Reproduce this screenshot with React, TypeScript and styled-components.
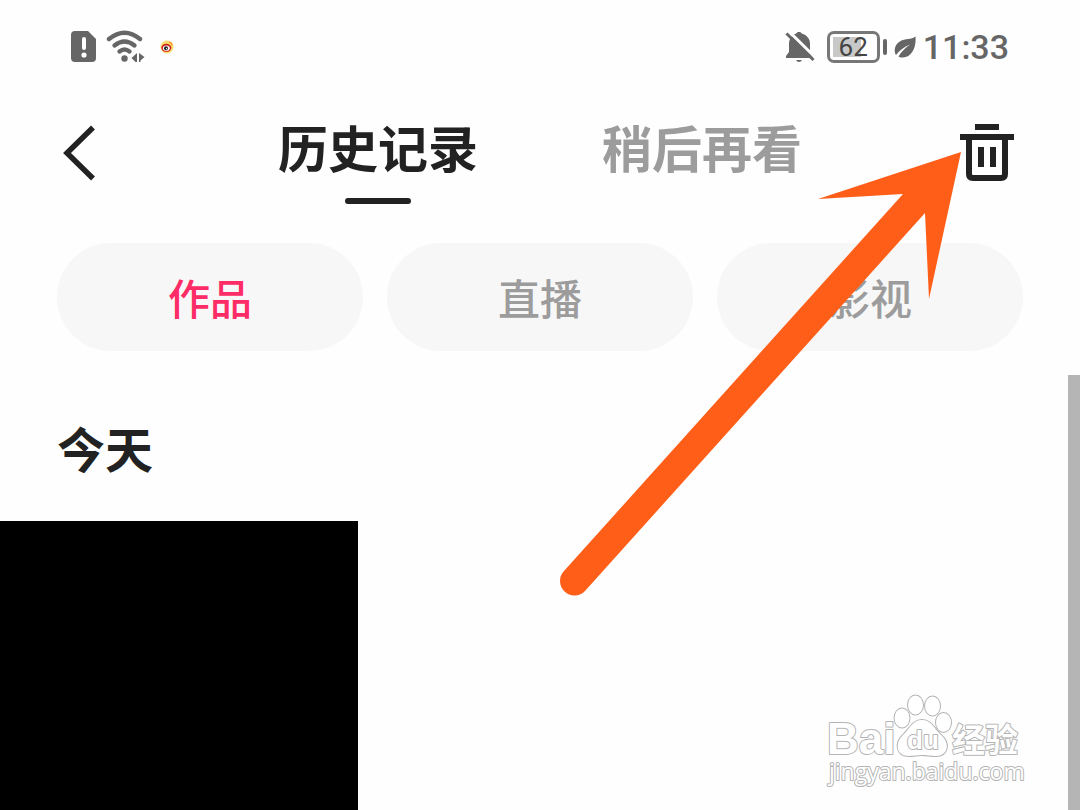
import React, { useState } from "react";
import styled, { createGlobalStyle } from "styled-components";

const GlobalStyle = createGlobalStyle`
  *, *::before, *::after { box-sizing: border-box; }
  body {
    margin: 0;
    background: #fefefe;
    color: #222;
    font-family: "Noto Sans CJK SC", sans-serif;
  }
  button { font-family: inherit; border: 0; padding: 0; background: none; cursor: pointer; }
  svg { display: block; }
`;

const Page = styled.div`
  position: relative;
  display: flex;
  flex-direction: column;
  min-height: 100vh;
  overflow: hidden;
`;

const StatusBar = styled.div`
  display: flex;
  justify-content: space-between;
  align-items: center;
  height: 94px;
  padding: 0 71px;
  color: #666;
`;

const StatusGroup = styled.div<{ $gap: number }>`
  display: flex;
  align-items: center;
  gap: ${(p) => p.$gap}px;
`;

const Battery = styled.div`
  display: flex;
  align-items: center;
  gap: 3px;

  &::after {
    content: "";
    width: 4px;
    height: 16px;
    border-radius: 2px;
    background: #666;
  }
`;

const BatteryCell = styled.div`
  width: 53px;
  height: 32px;
  padding: 3px;
  border: 3px solid #777;
  border-radius: 7px;
  background: linear-gradient(#c8c8c8, #c8c8c8) 3px 3px / 28px 20px no-repeat;
  font: 400 26px/20px Roboto, sans-serif;
  color: #444;
  text-align: center;
`;

const Clock = styled.time`
  font: 500 34px/42px Roboto, sans-serif;
`;

const Header = styled.header`
  display: grid;
  grid-template-columns: 1fr auto 1fr;
  align-items: start;
  height: 149px;
  padding: 26px 63px 0;
`;

const IconButton = styled.button<{ $end?: boolean }>`
  justify-self: ${(p) => (p.$end ? "end" : "start")};
  height: 66px;
`;

const Tabs = styled.nav`
  display: flex;
  gap: 124px;
`;

const Tab = styled.button<{ $active: boolean }>`
  display: flex;
  flex-direction: column;
  align-items: center;
  gap: 26px;
  font-size: 50px;
  line-height: 52px;
  font-weight: 700;
  color: ${(p) => (p.$active ? "#222" : "#9c9c9c")};

  &::after {
    content: "";
    width: 66px;
    height: 6px;
    border-radius: 3px;
    background: ${(p) => (p.$active ? "#222" : "transparent")};
  }
`;

const Content = styled.main`
  flex: 1;
  display: flex;
  flex-direction: column;
`;

const Chips = styled.div`
  display: flex;
  gap: 24px;
  padding: 0 57px;
`;

const Chip = styled.button<{ $active: boolean }>`
  flex: 1;
  height: 108px;
  border-radius: 54px;
  background: #f7f7f7;
  font-size: 42px;
  line-height: 60px;
  font-weight: 500;
  color: ${(p) => (p.$active ? "#fe2c66" : "#9c9c9c")};
`;

const DayTitle = styled.h2`
  margin: 0;
  padding: 66px 57px 44px;
  font-size: 48px;
  line-height: 60px;
  font-weight: 700;
`;

const Grid = styled.div`
  flex: 1;
  display: grid;
  grid-template-columns: repeat(3, 1fr);
  gap: 3px;
`;

const Cover = styled.div`
  min-height: 280px;
  background: #000;
`;

const ScrollThumb = styled.div`
  position: absolute;
  top: 375px;
  right: 0;
  bottom: 0;
  width: 12px;
  background: #b5b5b5;
`;

const Pointer = styled.svg`
  position: absolute;
  top: 140px;
  right: 110px;
  pointer-events: none;
`;

const Watermark = styled.svg`
  position: absolute;
  right: 50px;
  bottom: 20px;
  pointer-events: none;

  g {
    fill: #fff;
    stroke: #b4b4b4;
    stroke-width: 2;
    paint-order: stroke;
    stroke-linejoin: round;
  }
`;

const SimIcon = () => (
  <svg width="26" height="34" viewBox="1 0 26 34" aria-hidden="true">
    <path d="M5 1h13l8 8v19a4 4 0 0 1-4 4H5a4 4 0 0 1-4-4V5a4 4 0 0 1 4-4z" fill="#666" />
    <path d="M14 9v9" stroke="#fff" strokeWidth="4" strokeLinecap="round" />
    <circle cx="14" cy="25" r="2.6" fill="#fff" />
  </svg>
);

const WifiIcon = () => (
  <svg width="40" height="34" viewBox="0 0 40 34" aria-hidden="true">
    <g fill="none" stroke="#666" strokeWidth="4.4" strokeLinecap="round">
      <path d="M3 9Q18.500-3.500 34 9" />
      <path d="M8.500 15.500Q18.500 7.500 28.500 15.500" />
      <path d="M13.500 21.500Q18.500 17.500 23.500 21.500" />
    </g>
    <circle cx="18.500" cy="28.500" r="3.200" fill="#666" />
    <path d="M31 23v9h-1.500L25.500 28zM33 23v9h1.500V30.500L38.500 27z" fill="#666" />
  </svg>
);

const WeiboIcon = () => (
  <svg width="14" height="14" viewBox="0 0 14 14" aria-hidden="true">
    <circle cx="7" cy="7" r="6.500" fill="#fbdc6c" />
    <ellipse cx="6.300" cy="7.800" rx="5" ry="4" fill="#cf2020" />
    <ellipse cx="6.300" cy="8.200" rx="3.400" ry="2.600" fill="#fff" />
    <circle cx="6" cy="8.300" r="2" fill="#222" />
    <circle cx="6.600" cy="8.700" r="0.700" fill="#fff" />
    <path d="M9 2.500q3-.5 3 3" fill="none" stroke="#f5982c" strokeWidth="1.300" />
  </svg>
);

const MuteIcon = () => (
  <svg width="30" height="32" viewBox="0 0 30 32" aria-hidden="true">
    <path
      d="M14 1c1.600 0 2.400.7 2.800 1.500C22 4 25 8 25 12.500V20l2.500 4v3H1v-2l3-4V13c0-4.500 2.500-9 7.200-10.500C11.600 1.700 12.400 1 14 1z"
      fill="#666"
    />
    <path d="M11 29h6q-1 2-3 2t-3-2z" fill="#666" />
    <path d="M3.500 0 32 28" stroke="#fefefe" strokeWidth="3" />
    <path d="M0 0h5L-1 8z" fill="#fefefe" />
    <path d="M1.500 2.500 28.500 29" stroke="#666" strokeWidth="3" />
  </svg>
);

const LeafIcon = () => (
  <svg width="22" height="24" viewBox="0 0 22 24" aria-hidden="true">
    <path
      d="M21.500 1.500C22.500 12 18 23 8 22.500c-1.500 0-2.500-.3-3.500-1C7 17 11 13 16 9.500 10 12 5.500 15.500 2 20 .500 18 .500 15 1 13 2.500 6.500 9 4.500 14 4c3-.3 5.500-1 7.500-2.500z"
      fill="#666"
    />
  </svg>
);

const BackIcon = () => (
  <svg width="36" height="66" viewBox="0 0 36 66" aria-hidden="true">
    <path d="M30 7.500 4 33l26 25.500" fill="none" stroke="#222" strokeWidth="5.500" />
  </svg>
);

const TrashIcon = () => (
  <svg width="57" height="66" viewBox="0 0 57 66" aria-hidden="true">
    <path d="M15 4h24v6H15zM0 14h54v6H0zM18 27h6v20h-6zM30 27h6v20h-6z" fill="#222" />
    <path d="M9 17v37q0 4 4 4h28q4 0 4-4V17" fill="none" stroke="#222" strokeWidth="6" />
  </svg>
);

const tabs = ["历史记录", "稍后再看"];
const chips = ["作品", "直播", "影视"];

export default function App() {
  const [tab, setTab] = useState(0);
  const [chip, setChip] = useState(0);

  return (
    <>
      <GlobalStyle />
      <Page>
        <StatusBar>
          <StatusGroup $gap={14}>
            <StatusGroup $gap={9}>
              <SimIcon />
              <WifiIcon />
            </StatusGroup>
            <WeiboIcon />
          </StatusGroup>
          <StatusGroup $gap={12}>
            <MuteIcon />
            <StatusGroup $gap={7}>
              <Battery>
                <BatteryCell>62</BatteryCell>
              </Battery>
              <LeafIcon />
              <Clock>11:33</Clock>
            </StatusGroup>
          </StatusGroup>
        </StatusBar>

        <Header>
          <IconButton aria-label="返回">
            <BackIcon />
          </IconButton>
          <Tabs>
            {tabs.map((label, i) => (
              <Tab key={label} $active={i === tab} onClick={() => setTab(i)}>
                {label}
              </Tab>
            ))}
          </Tabs>
          <IconButton $end aria-label="删除">
            <TrashIcon />
          </IconButton>
        </Header>

        <Content>
          <Chips>
            {chips.map((label, i) => (
              <Chip key={label} $active={i === chip} onClick={() => setChip(i)}>
                {label}
              </Chip>
            ))}
          </Chips>
          <DayTitle>今天</DayTitle>
          <Grid>
            <Cover />
          </Grid>
        </Content>

        <ScrollThumb />

        <Pointer width="420" height="460" viewBox="550 140 420 460" aria-hidden="true">
          <path
            d="M961 152 929 299 925 213 585 591A14.500 14.500 0 0 1 564 571L903 194 818 199z"
            fill="#ff5e18"
          />
        </Pointer>

        <Watermark width="210" height="100" viewBox="820 690 210 100" role="img" aria-label="Baidu 经验">
          <g>
            <text x="827" y="754" fontFamily="Liberation Sans, sans-serif" fontWeight="700" fontSize="44">Bai</text>
            <ellipse cx="902" cy="718" rx="7.500" ry="9.500" />
            <ellipse cx="915.500" cy="705" rx="7.500" ry="9.500" />
            <ellipse cx="932.500" cy="706" rx="7.500" ry="9.500" />
            <ellipse cx="943.500" cy="722.500" rx="7.500" ry="9.500" />
            <path d="M922 720c9 0 12 8 18 14 11 9 8 22-4 22-6 0-9-1-14-1s-8 1-13 1c-13 0-15-13-5-22 6-6 9-14 18-14z" />
            <text x="907" y="749" fontFamily="Liberation Sans, sans-serif" fontWeight="700" fontSize="26">du</text>
            <text x="952" y="752" fontFamily="Noto Sans CJK SC, sans-serif" fontWeight="700" fontSize="33">经验</text>
            <text x="829" y="780" fontFamily="Open Sans, sans-serif" fontWeight="400" fontSize="23">jingyan.baidu.com</text>
          </g>
        </Watermark>
      </Page>
    </>
  );
}
